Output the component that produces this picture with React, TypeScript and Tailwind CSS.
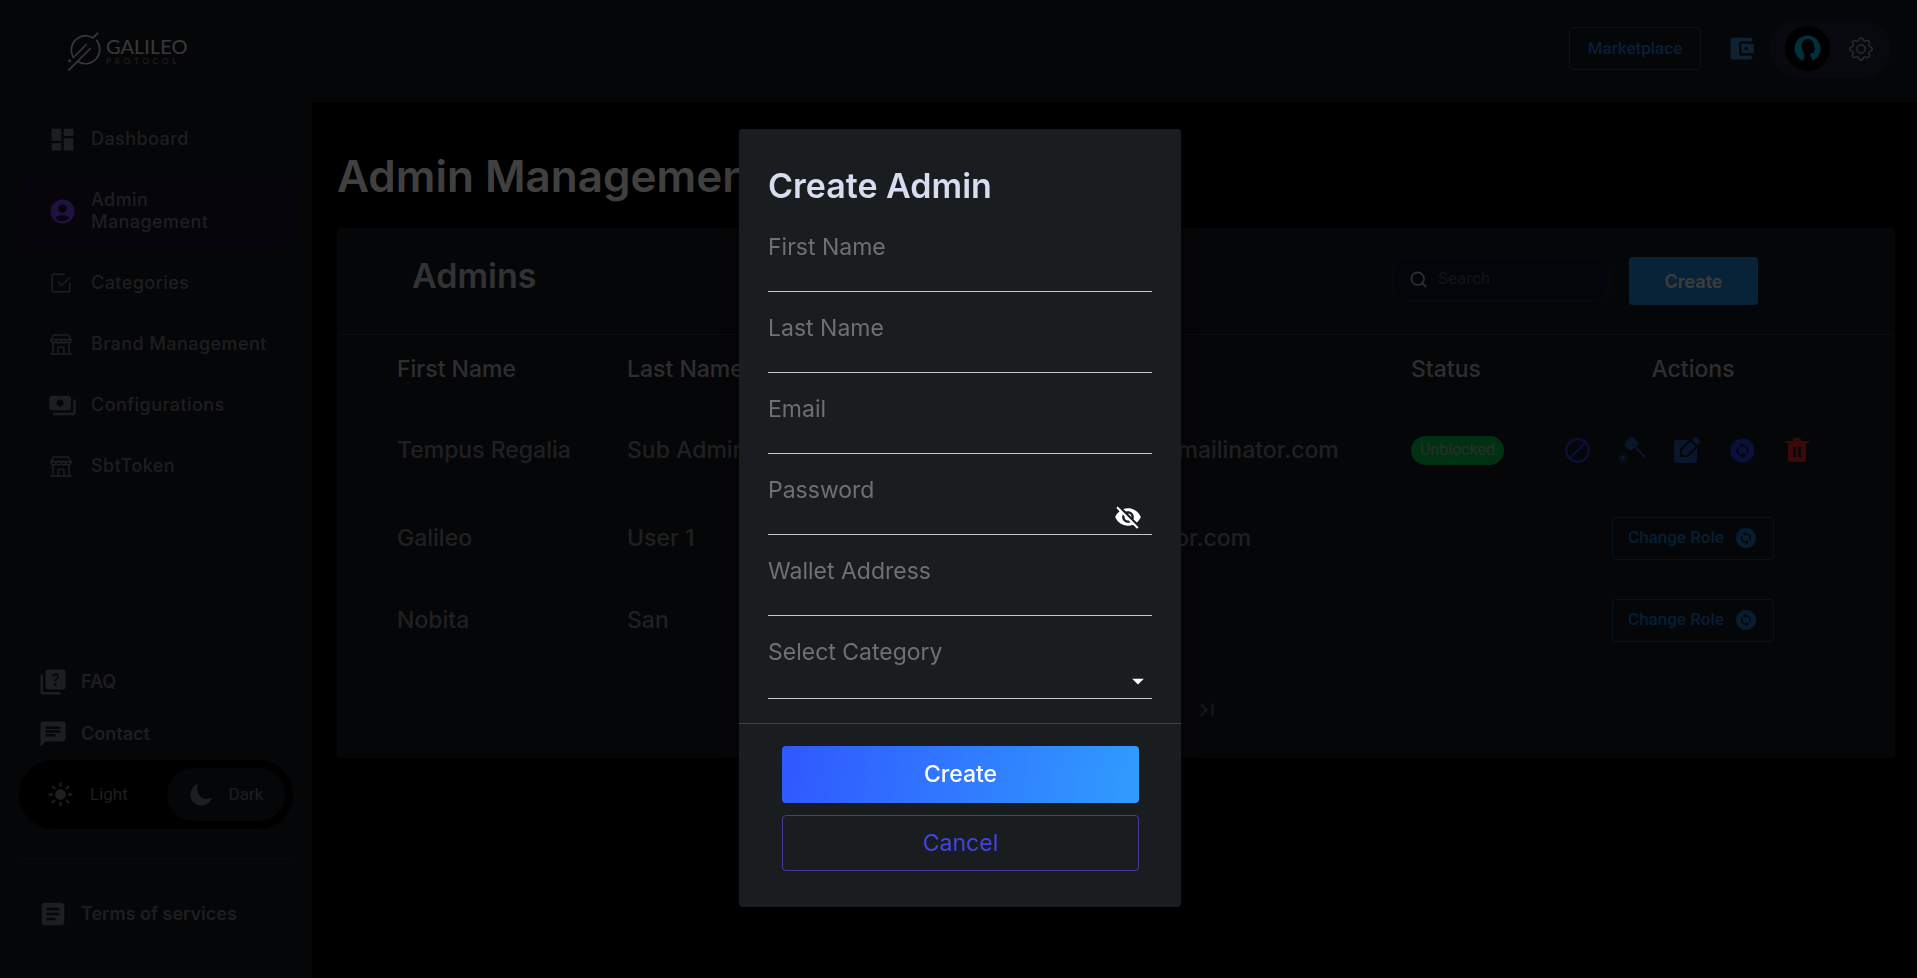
import { useState, type ReactNode } from "react";
import {
  MdAccountBalanceWallet,
  MdAccountCircle,
  MdArrowDropDown,
  MdArticle,
  MdChangeCircle,
  MdChat,
  MdChevronLeft,
  MdChevronRight,
  MdDashboard,
  MdFirstPage,
  MdLastPage,
  MdPayments,
  MdQuiz,
  MdVisibility,
  MdVisibilityOff,
} from "react-icons/md";
import { BsGear } from "react-icons/bs";
import { IoMoon, IoSunny } from "react-icons/io5";
import { FiSearch } from "react-icons/fi";

function LogoMark() {
  return (
    <svg viewBox="200 98 102 122" className="h-[41px] w-[34px]" fill="none" stroke="currentColor" strokeWidth="5" strokeLinecap="round" aria-hidden="true">
      <path d="M292 104 L278 118 A43 43 0 0 0 219 177 L258 138" />
      <path d="M289 126 A43 43 0 0 1 234 190" />
      <path d="M206 214 L270 150" />
      <circle cx="208" cy="187" r="2" />
    </svg>
  );
}

function CheckBoxIcon() {
  return (
    <svg viewBox="0 0 20 20" className="mr-[3px] size-5" fill="none" stroke="currentColor" strokeWidth="1.5" strokeLinecap="round" strokeLinejoin="round" aria-hidden="true">
      <path d="M13.5 1.2H3A1.8 1.8 0 0 0 1.2 3v14A1.8 1.8 0 0 0 3 18.8h14a1.8 1.8 0 0 0 1.8-1.8v-7" />
      <path d="M7 8.8l3.4 3.8 8.6-8.4" />
    </svg>
  );
}

function StoreIcon() {
  return (
    <svg viewBox="0 0 22 21" className="mr-[3px] h-[21px] w-[22px]" fill="none" stroke="currentColor" strokeWidth="1.6" strokeLinecap="round" strokeLinejoin="round" aria-hidden="true">
      <path d="M3.6 1h14.8l2.4 4.6H1.2L3.6 1z" />
      <path d="M1.2 5.6v1a2.4 2.4 0 0 0 4.9 0 2.4 2.4 0 0 0 4.9 0 2.4 2.4 0 0 0 4.9 0 2.4 2.4 0 0 0 4.9 0v-1" />
      <path d="M3 9v11M19 9v11M.8 20h20.4" />
      <path d="M8 20v-5.4a1.4 1.4 0 0 1 1.4-1.4h3.2a1.4 1.4 0 0 1 1.4 1.4V20" />
    </svg>
  );
}

function AvatarIcon() {
  return (
    <svg viewBox="0 0 45 45" className="size-[45px]" aria-hidden="true">
      <circle cx="22.500" cy="22.500" r="22.500" fill="#000" />
      <circle cx="22.500" cy="22.500" r="13" fill="#00bfee" />
      <path d="M16.500 20c0-4 3-7 6.500-7 4 0 6 3 6 6.500l1.200 4-1.300.6v3h-3.600v2.500l3.500 7h-11l1.700-6.500c.3-3-3-5.500-3-10.100z" fill="#000" />
    </svg>
  );
}

function BlockIcon() {
  return (
    <svg viewBox="0 0 24 24" className="size-[25px]" fill="none" stroke="#2a40f0" strokeWidth="2" aria-hidden="true">
      <circle cx="12" cy="12" r="10.900" />
      <path d="M4.800 19.200L19.200 4.800" />
    </svg>
  );
}

function GavelIcon() {
  return (
    <svg viewBox="229 49 86 84" className="size-7" fill="#2458b0" aria-hidden="true">
      <path d="M249 72l20-20q3-3 6 0l16 15q3 3 0 6l-20 19q-3 3-6 0l-16-15q-3-2 0-5z" />
      <path d="M284 84l26 26" stroke="#2458b0" strokeWidth="6" strokeLinecap="round" />
      <path d="M252 64l10-9" stroke="#2458b0" strokeWidth="3" />
      <circle cx="245" cy="116" r="13" fill="none" stroke="#1d4480" strokeWidth="5" strokeDasharray="8 2" />
      <circle cx="245" cy="116" r="7" />
    </svg>
  );
}

function EditIcon() {
  return (
    <svg viewBox="0 0 26 26" className="size-[26px]" fill="#2458b0" aria-hidden="true">
      <path d="M2.500 3H15l-9 9v8h8l9-9v12.500a2.500 2.500 0 0 1-2.500 2.500h-18A2.500 2.500 0 0 1 0 23.500v-18A2.500 2.500 0 0 1 2.500 3z" />
      <path d="M7.800 13.200l8.700-8.700 5 5-8.700 8.700H7.800z" />
      <path d="M18 3l1.800-1.900a2.400 2.400 0 0 1 3.400 0l1.700 1.700a2.400 2.400 0 0 1 0 3.400L23 8z" />
    </svg>
  );
}

function TrashIcon() {
  return (
    <svg viewBox="0 0 24 24" className="size-6" aria-hidden="true">
      <path fillRule="evenodd" fill="#e82828" d="M9 0h6l1 2v1h8v2h-3v16.500a2.500 2.500 0 0 1-2.500 2.500h-13A2.500 2.500 0 0 1 3 21.500V5H0V3h8V2zM8.300 9v10h2.500V9zm4.900 0v10h2.500V9z" />
    </svg>
  );
}

function NavLink({ icon, label, active }: { icon: ReactNode; label: string; active?: boolean }) {
  return (
    <a
      href="#"
      aria-current={active ? "page" : undefined}
      className={
        active
          ? "flex items-center gap-[14px] rounded-2xl bg-[#1a152c] py-[17px] pr-12 pl-[29px]"
          : "flex items-center gap-[14px] rounded-2xl py-[17px] pr-1 pl-[29px]"
      }
    >
      <span className={active ? "flex w-[29px] shrink-0 justify-center text-[#8048ff]" : "flex w-[29px] shrink-0 justify-center"}>
        {icon}
      </span>
      <span className="text-[18px] leading-[22px] font-medium tracking-wide">{label}</span>
    </a>
  );
}

function FooterLink({ icon, label }: { icon: ReactNode; label: string }) {
  return (
    <a href="#" className="flex h-[52px] items-center gap-[13px] pl-[19px]">
      {icon}
      <span className="text-[18px] leading-[22px] font-semibold">{label}</span>
    </a>
  );
}

function Sidebar() {
  return (
    <aside className="flex w-[312px] shrink-0 flex-col bg-[#16191e] px-[19px] pt-[9px] pb-[38px] text-[#74777d]">
      <nav className="flex flex-col gap-[5px]">
        <NavLink icon={<MdDashboard size={29} className="-my-1" />} label="Dashboard" />
        <NavLink icon={<MdAccountCircle size={29} />} label="Admin Management" active />
        <NavLink icon={<CheckBoxIcon />} label="Categories" />
        <NavLink icon={<StoreIcon />} label="Brand Management" />
        <NavLink icon={<MdPayments size={29} className="-my-1" />} label="Configurations" />
        <NavLink icon={<StoreIcon />} label="SbtToken" />
      </nav>
      <div className="mt-auto flex flex-col">
        <FooterLink icon={<MdQuiz size={30} />} label="FAQ" />
        <FooterLink icon={<MdChat size={30} />} label="Contact" />
        <div className="flex h-[69px] items-center justify-between rounded-full bg-black px-2 [font-family:Roboto,sans-serif] text-[17px]">
          <button type="button" className="flex items-center gap-4 pl-5">
            <IoSunny size={27} />
            Light
          </button>
          <button type="button" className="flex h-[53px] w-[118px] items-center justify-center gap-4 rounded-full bg-[#16191e]">
            <IoMoon size={24} />
            Dark
          </button>
        </div>
        <hr className="my-[29px] border-[#2a2d34]" />
        <FooterLink icon={<MdArticle size={30} />} label="Terms of services" />
      </div>
    </aside>
  );
}

function Header() {
  return (
    <header className="flex h-[102px] items-center justify-between bg-[#16191e] pr-[26px] pl-[67px]">
      <a href="#" aria-label="Galileo Protocol" className="flex items-center gap-[5px] text-[#e0e0e0]">
        <LogoMark />
        <span className="flex flex-col [font-family:Lato,sans-serif]">
          <span className="text-[20px] leading-[20px]">GALILEO</span>
          <span className="text-[8px] leading-[10px] tracking-[4px] text-[#8a8a8a]">PROTOCOL</span>
        </span>
      </a>
      <div className="flex items-center pb-[5px]">
        <button type="button" className="h-[43px] w-[132px] rounded border border-[#14507c] [font-family:Roboto,sans-serif] text-[17px] font-medium text-[#1e78d8]">
          Marketplace
        </button>
        <button type="button" aria-label="Wallet" className="mr-[14px] ml-[26px] text-[#3c88cc]">
          <MdAccountBalanceWallet size={29} />
        </button>
        <div className="flex h-[58px] w-[121px] items-center justify-between rounded-full bg-[#20233e] pr-[18px] pl-[15px]">
          <AvatarIcon />
          <button type="button" aria-label="Settings" className="text-[#a4a8b8]">
            <BsGear size={24} />
          </button>
        </div>
      </div>
    </header>
  );
}

function ChangeRoleButton() {
  return (
    <button type="button" className="inline-flex h-[43px] w-[162px] items-center justify-center gap-[10px] rounded border border-[#14507c] [font-family:Roboto,sans-serif] text-[17px] font-medium text-[#1e78c8]">
      Change Role
      <MdChangeCircle size={24} />
    </button>
  );
}

function RowActions() {
  return (
    <div className="flex items-center justify-center gap-7 pr-3">
      <button type="button" aria-label="Block">
        <BlockIcon />
      </button>
      <button type="button" aria-label="Auction rights">
        <GavelIcon />
      </button>
      <button type="button" aria-label="Edit">
        <EditIcon />
      </button>
      <button type="button" aria-label="Change role" className="text-[#2a40f0]">
        <MdChangeCircle size={29} />
      </button>
      <button type="button" aria-label="Delete">
        <TrashIcon />
      </button>
    </div>
  );
}

const admins = [
  { first: "Tempus Regalia", last: "Sub Admin", email: "tempusregalia.subadmin@mailinator.com", full: true },
  { first: "Galileo", last: "User 1", email: "galileo.user.one1@mailinator.com", full: false },
  { first: "Nobita", last: "San", email: "nobita@mail.com", full: false },
];

function AdminsCard() {
  return (
    <section className="rounded bg-[#16191e]">
      <div className="flex h-[107px] items-start justify-between border-b border-[#303339] pt-[29px] pr-[137px] pl-[75px]">
        <h2 className="text-[34px] leading-[38px] font-semibold text-[#c4c7d0]">Admins</h2>
        <div className="flex items-start gap-[19px]">
          <div className="flex h-11 w-[217px] items-center gap-[10px] rounded-2xl border border-[#262c48] bg-[#0c152e] px-[15px] [font-family:Roboto,sans-serif]">
            <FiSearch size={19} className="shrink-0 text-[#c8c8c8]" />
            <input type="search" aria-label="Search" placeholder="Search" className="w-full min-w-0 bg-transparent text-[17px] outline-none placeholder:text-[#484e60]" />
          </div>
          <button type="button" className="h-12 w-[129px] rounded bg-[#2088e0] text-[18px] font-semibold text-[#f0f0f0]">
            Create
          </button>
        </div>
      </div>
      <table className="w-full table-fixed text-left">
        <thead className="text-[23px] text-[#b4b6be]">
          <tr className="h-[68px]">
            <th className="w-[290px] pl-[60px] font-medium">First Name</th>
            <th className="w-[230px] font-medium">Last Name</th>
            <th className="pl-[27px] font-medium">Email</th>
            <th className="w-[140px] font-medium">Status</th>
            <th className="w-[344px] pr-[60px] text-center font-medium">Actions</th>
          </tr>
        </thead>
        <tbody className="text-[23px] font-medium text-[#7e8086]">
          {admins.map((a) => (
            <tr key={a.first} className={a.full ? "h-[94px]" : "h-[82px]"}>
              <td className="pl-[60px]">{a.first}</td>
              <td>{a.last}</td>
              <td className="pl-[27px]">{a.email}</td>
              <td>
                {a.full && (
                  <span className="flex h-[29px] w-[93px] items-center justify-center rounded-full bg-[#00c44c] [font-family:Roboto,sans-serif] text-[16px] font-normal text-[#a8b8ac]">
                    Unblocked
                  </span>
                )}
              </td>
              <td className="pr-[60px] text-center">{a.full ? <RowActions /> : <ChangeRoleButton />}</td>
            </tr>
          ))}
        </tbody>
      </table>
      <nav aria-label="Pagination" className="flex h-[97px] items-center justify-center gap-5 text-[#5c5e68]">
        <button type="button" aria-label="First page"><MdFirstPage size={26} /></button>
        <button type="button" aria-label="Previous page"><MdChevronLeft size={26} /></button>
        <button type="button" className="w-6 text-[18px]">1</button>
        <button type="button" aria-label="Next page"><MdChevronRight size={26} /></button>
        <button type="button" aria-label="Last page"><MdLastPage size={26} /></button>
      </nav>
    </section>
  );
}

const fieldBox = "w-full border-b border-[#c4c8c8] bg-transparent text-[18px] text-white outline-none";

function Field({ id, label, type = "text" }: { id: string; label: string; type?: string }) {
  return (
    <div>
      <label htmlFor={id} className="block text-[23px] leading-8 text-[#6e7072]">
        {label}
      </label>
      <input id={id} type={type} className={`${fieldBox} h-[29px]`} />
    </div>
  );
}

function CreateAdminDialog() {
  const [visible, setVisible] = useState(false);
  return (
    <div className="fixed inset-0 flex items-start justify-center overflow-auto bg-black/75 pt-[129px] pl-[3px]">
      <form
        role="dialog"
        aria-labelledby="dialog-title"
        className="w-[442px] rounded bg-[#1a1d1f] shadow-[0_11px_15px_-7px_rgba(0,0,0,0.2),0_24px_38px_3px_rgba(0,0,0,0.14),0_9px_46px_8px_rgba(0,0,0,0.12)]"
        onSubmit={(e) => e.preventDefault()}
      >
        <div className="flex flex-col gap-6 border-b border-[#3c3f48] px-[29px] pt-9 pb-6">
          <h2 id="dialog-title" className="text-[34px] leading-[42px] font-semibold text-[#d8dcf0]">
            Create Admin
          </h2>
          <div className="flex flex-col gap-5">
            <Field id="first-name" label="First Name" />
            <Field id="last-name" label="Last Name" />
            <Field id="email" label="Email" type="email" />
            <div className="relative">
              <Field id="password" label="Password" type={visible ? "text" : "password"} />
              <button
                type="button"
                aria-label="Toggle password visibility"
                onClick={() => setVisible(!visible)}
                className="absolute right-[10px] bottom-1 text-white"
              >
                {visible ? <MdVisibility size={28} /> : <MdVisibilityOff size={28} />}
              </button>
            </div>
            <Field id="wallet" label="Wallet Address" />
            <div className="relative">
              <label htmlFor="category" className="block text-[23px] leading-8 text-[#6e7072]">
                Select Category
              </label>
              <select id="category" defaultValue="" className={`${fieldBox} h-[31px] appearance-none`}>
                <option value="" />
              </select>
              <MdArrowDropDown size={28} className="pointer-events-none absolute right-0 bottom-1 text-white" />
            </div>
          </div>
        </div>
        <div className="flex flex-col gap-3 pt-[22px] pr-[42px] pb-9 pl-[43px]">
          <button type="submit" className="h-[57px] rounded bg-linear-[100deg,#3058ff,#309cff] text-[23px] font-medium text-white">
            Create
          </button>
          <button type="button" className="h-14 rounded border border-[#4c389c] text-[23px] font-normal text-[#4244e4]">
            Cancel
          </button>
        </div>
      </form>
    </div>
  );
}

export default function App() {
  return (
    <div className="flex min-h-screen flex-col bg-black [font-family:Inter,sans-serif]">
      <Header />
      <div className="flex grow">
        <Sidebar />
        <main className="min-w-0 grow px-[22px] pt-[46px] pl-[25px]">
          <h1 className="mb-6 text-[44px] leading-[56px] font-semibold text-white">Admin Management</h1>
          <AdminsCard />
        </main>
      </div>
      <CreateAdminDialog />
    </div>
  );
}
